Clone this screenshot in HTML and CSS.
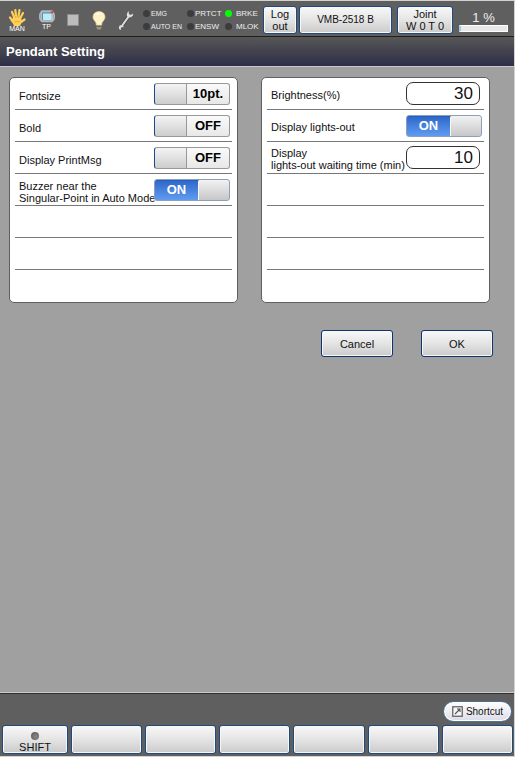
FILE: index.html
```html
<!DOCTYPE html>
<html lang="en">
<head>
<meta charset="utf-8">
<meta name="viewport" content="width=device-width, initial-scale=1">
<title>Pendant Setting</title>
<link rel="stylesheet" href="styles.css">
</head>
<body>
<header class="status">
  <div class="icons">
    <div class="mode">
      <svg width="18" height="18" viewBox="0 0 18 18"><path d="M6 15 L3.500 12 M6.500 10 L4 4 M8.200 9 L7.300 2 M10.400 9 L11.500 2 M12 10.500 L15 5 M5 13 L2 9.500 M13 14 L16.500 11.500" stroke="#ffcf57" stroke-width="2.200" stroke-linecap="round" fill="none"/><path d="M5 9 H13 L13.800 14 L12 18 H6 L4 13Z" fill="#ffcf57"/><path d="M6.500 14 Q9 12.500 12 14 M7.800 8 V10 M10.200 8 V10" stroke="#d99a30" stroke-width=".7" fill="none"/></svg>
      <span>MAN</span>
    </div>
    <div class="mode">
      <svg width="16" height="14" viewBox="0 0 16 14"><rect x=".5" y="2.500" width="15" height="8" rx="2" fill="#8f959a" stroke="#c6cbd0" stroke-width=".7"/><rect x="2" y=".8" width="12" height="11" rx="1" fill="#a6b0b6" stroke="#dde1e4" stroke-width=".6"/><rect x="3.500" y="3" width="9" height="7" fill="#b9eef8"/><path d="M3.500 10V3H12.500" stroke="#4d8fb5" fill="none"/><circle cx="13" cy="2.300" r="1.200" fill="#f0342b"/></svg>
      <span>TP</span>
    </div>
    <svg width="12" height="12" viewBox="0 0 12 12"><rect width="12" height="12" fill="#8d8d8d"/><rect x="1" y="1" width="10" height="10" fill="#bcbcbc"/></svg>
    <svg width="14" height="19" viewBox="0 0 14 19"><path d="M4.300 14 Q4.500 11.500 2.400 9.500 Q1 7.800 1 6 Q1.300 .8 7 .6 Q12.700 .8 13 6 Q13 7.800 11.600 9.500 Q9.500 11.500 9.700 14Z" fill="#fdf2c8" stroke="#e9d9a0" stroke-width=".7"/><path d="M4 3.500 Q6 1.500 8.500 2.500" stroke="#fff" stroke-width="1.500" fill="none"/><path d="M4.500 14H9.500V17L8.500 18.500H5.500L4.500 17Z" fill="#9a9680"/><path d="M4.500 15.500H9.500" stroke="#5c5848" stroke-width=".8"/></svg>
    <svg width="16" height="21" viewBox="0 0 16 21"><path d="M3.800 16 L11 6" stroke="#484848" stroke-width="3.400"/><path d="M3.800 16 L11 6" stroke="#dedede" stroke-width="2"/><path d="M10.500 1 Q8 4 9.200 6.500 Q12 9 15 5.500 V3.500 L12.800 5 L11 4Z" fill="#dedede"/><path d="M3 20 A2.500 2.500 0 1 1 5.800 17.200 L4 17 L2.800 18Z" fill="#dedede"/></svg>
  </div>
  <ul class="lamps">
    <li class="small">EMG</li><li>PRTCT</li><li class="lit">BRKE</li>
    <li class="small">AUTO EN</li><li>ENSW</li><li>MLOK</li>
  </ul>
  <button class="btn logout">Log<br>out</button>
  <button class="btn robot">VMB-2518 B</button>
  <button class="btn joint">Joint<br>W 0 T 0</button>
  <div class="speed"><span>1 %</span><div class="bar"></div></div>
</header>
<h1>Pendant Setting</h1>
<main>
  <div class="panels">
    <section class="panel left">
      <div class="row"><label for="size">Fontsize</label><div class="toggle"><input type="checkbox" id="size"><span>10pt.</span></div></div>
      <div class="row"><label for="bold">Bold</label><div class="toggle"><input type="checkbox" id="bold"><span>OFF</span></div></div>
      <div class="row"><label for="msg">Display PrintMsg</label><div class="toggle"><input type="checkbox" id="msg"><span>OFF</span></div></div>
      <div class="row"><label for="buzzer">Buzzer near the<br>Singular-Point in Auto Mode</label><div class="toggle on"><input type="checkbox" id="buzzer" checked><span>ON</span></div></div>
      <div class="row"></div><div class="row"></div><div class="row"></div>
    </section>
    <section class="panel right">
      <div class="row"><label for="bright">Brightness(%)</label><input class="number" id="bright" type="text" inputmode="numeric" value="30"></div>
      <div class="row"><label for="lights">Display lights-out</label><div class="toggle on"><input type="checkbox" id="lights" checked><span>ON</span></div></div>
      <div class="row"><label for="wait">Display<br>lights-out waiting time (min)</label><input class="number" id="wait" type="text" inputmode="numeric" value="10"></div>
      <div class="row"></div><div class="row"></div><div class="row"></div><div class="row"></div>
    </section>
  </div>
  <div class="actions"><button class="btn">Cancel</button><button class="btn">OK</button></div>
</main>
<footer>
  <button class="shortcut"><svg width="11" height="11" viewBox="0 0 11 11"><rect x=".75" y=".75" width="9.500" height="9.500" fill="#f5f5f5" stroke="#666" stroke-width="1.300"/><path d="M3 8 L7.500 3.500 M5 3H8V6" stroke="#555" stroke-width="1.100" fill="none"/></svg>Shortcut</button>
  <nav class="keys" aria-label="Function keys">
    <button class="btn shift"><i></i>SHIFT</button>
    <button class="btn"></button><button class="btn"></button><button class="btn"></button><button class="btn"></button><button class="btn"></button><button class="btn"></button>
  </nav>
</footer>
</body>
</html>
```
FILE: styles.css
```css
* { box-sizing: border-box; }

body {
  margin: 0;
  min-height: 100vh;
  display: flex;
  flex-direction: column;
  border: solid #d2d2d2;
  border-width: 1px 1px 1px 0;
  background: #a0a0a0;
  color: #111;
  font: 11px/12px "Liberation Sans", Arial, sans-serif;
}

button, input { font: inherit; color: inherit; margin: 0; padding: 0; }
svg { display: block; }

.btn {
  border: 1px solid #1d4a80;
  border-radius: 3px;
  background: linear-gradient(#f8f8f8, #e4e4e4 50%, #cacaca);
  box-shadow: inset 0 0 0 1px #f7f7f7;
}

/* status bar */
.status {
  display: flex;
  align-items: center;
  height: 36px;
  padding-right: 6px;
  background: #5f5f5f;
  border-bottom: 1px solid #1e1e1e;
}

.icons {
  display: grid;
  grid-template-columns: 18px 16px 12px 14px 16px;
  justify-content: space-between;
  align-items: center;
  width: 126px;
  margin: 3px 9px 0 8px;
}

.mode {
  display: flex;
  flex-direction: column;
  align-items: center;
  color: #fff;
  font-size: 7px;
  line-height: 6px;
}

.lamps {
  display: grid;
  grid-template-columns: 44px 38px 37px;
  row-gap: 3px;
  width: 120px;
  margin: 3px 0 0;
  padding: 0;
  list-style: none;
  color: #eee;
  font-size: 8px;
  line-height: 10px;
  white-space: nowrap;
}

.lamps li { display: flex; align-items: center; gap: 1px; }
.lamps li:nth-child(3n) { gap: 4px; }
.lamps .small { font-size: 7px; }

.lamps li::before {
  content: "";
  width: 7px;
  height: 7px;
  border-radius: 50%;
  background: #3c3c3c;
}

.lamps .lit::before { background: #0f0; }

.status .btn { height: 28px; margin-top: 2px; }
.status .logout { width: 34px; margin-right: 2px; }
.status .robot { flex: 1; margin-right: 5px; font-size: 10px; }
.status .joint { width: 56px; margin-right: 6px; }

.speed { width: 49px; margin-top: 5px; color: #eee; font-size: 13px; line-height: 15px; text-align: center; }

.bar {
  height: 7px;
  border: 1px solid #fff;
  border-left: 2px solid #9fc8ee;
  background: #e8e8e8;
}

h1 {
  margin: 0;
  padding: 0 6px;
  color: #fff;
  font-size: 13px;
  line-height: 29px;
  background: linear-gradient(#575757, #2e2e49);
  border-bottom: 1px solid #c8c8c8;
}

/* settings */
main { flex: 1; padding: 10px 24px 24px 9px; }

.panels {
  display: grid;
  grid-template-columns: repeat(2, minmax(0, 1fr));
  gap: 23px;
}

.panel {
  padding: 0 5px;
  border: 1px solid #606060;
  border-radius: 5px;
  background: #fff;
}

.row {
  display: flex;
  align-items: center;
  justify-content: space-between;
  height: 32px;
  padding: 0 2px 0 4px;
  border-bottom: 1px solid #777;
}

.row:last-child { border-bottom: 0; }
.row label { min-width: 0; padding-top: 2px; white-space: nowrap; }
.left label { padding-top: 4px; }

.toggle {
  position: relative;
  flex: none;
  width: 76px;
  height: 22px;
}

.toggle input {
  display: block;
  appearance: none;
  width: 100%;
  height: 100%;
  border: 1px solid #999;
  border-left-color: #174a91;
  border-radius: 3px;
  background:
    linear-gradient(90deg, transparent 31px, #999 31px, #999 32px, transparent 32px),
    linear-gradient(90deg, #0000 32px, #fff8 32px),
    linear-gradient(#f4f4f4, #cdcdcd);
}

.toggle span {
  position: absolute;
  inset: 0 0 0 32px;
  color: #000;
  font-size: 13px;
  font-weight: bold;
  line-height: 22px;
  text-align: center;
  pointer-events: none;
}

.toggle.on input {
  border-color: #8ca0bd;
  background:
    linear-gradient(90deg, #2860bd 43px, #999 43px, #999 44px, transparent 44px) 0 0 / 100% 1px no-repeat,
    linear-gradient(90deg, transparent 43px, #f8f8f8 43px, #f8f8f8 44px, transparent 44px),
    linear-gradient(#2c67c9, #609bf2) 0 0 / 43px 100% no-repeat,
    linear-gradient(#f2f2f2, #c7c7c7);
}

.toggle.on span { inset: 0 31px 0 0; color: #fff; }

.number {
  flex: none;
  width: 74px;
  height: 23px;
  margin-right: 2px;
  padding: 0 6px;
  border: 1px solid #333;
  border-radius: 7px;
  background: #fff;
  font-size: 17px;
  text-align: right;
}

.actions {
  display: flex;
  justify-content: flex-end;
  gap: 28px;
  margin: 27px -3px 0 0;
}

.actions .btn { width: 72px; height: 27px; border-color: #0f3470; }

/* footer */
footer {
  padding: 7px 1px 2px 2px;
  border-top: 1px solid #303030;
  box-shadow: 0 -1px #ccc;
  background: #5f5f5f;
}

.shortcut {
  display: flex;
  align-items: center;
  justify-content: center;
  gap: 3px;
  width: 69px;
  height: 21px;
  margin: 0 1px 3px auto;
  border: 1px solid #4d7297;
  border-radius: 11px;
  background: linear-gradient(#fff, #dcdce8);
  box-shadow: inset 0 0 0 1px #fff;
  font-size: 10px;
}

.keys { display: grid; grid-template-columns: 66px repeat(6, 1fr); gap: 3px; }
.keys .btn { height: 29px; }

.shift { display: flex; flex-direction: column; align-items: center; justify-content: flex-end; }

.shift i {
  width: 8px;
  height: 8px;
  margin-bottom: 1px;
  border-radius: 50%;
  background: radial-gradient(circle at 60% 60%, #888, #555);
}
```
